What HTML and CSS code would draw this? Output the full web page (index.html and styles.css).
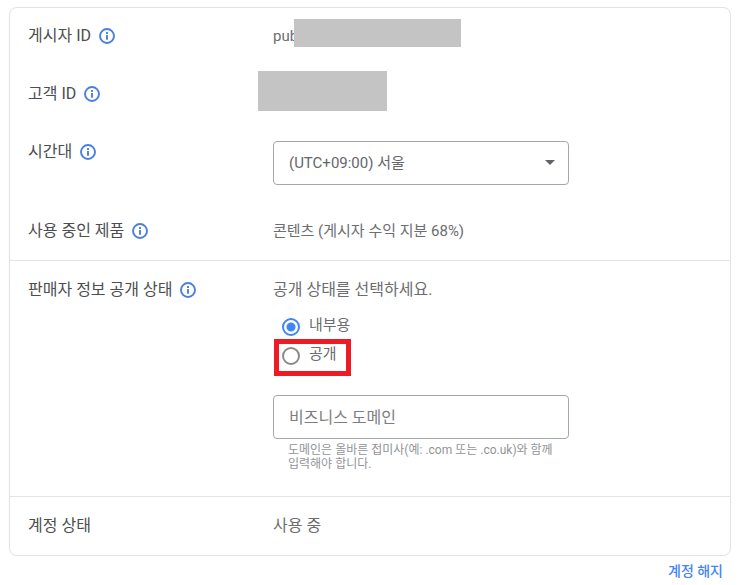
FILE: index.html
```html
<!DOCTYPE html>
<html lang="ko">
<head>
<meta charset="utf-8">
<meta name="viewport" content="width=device-width, initial-scale=1">
<title>계정 정보</title>
<link rel="stylesheet" href="styles.css">
</head>
<body>
<svg class="sprite" aria-hidden="true">
  <symbol id="info" viewBox="0 0 16 16">
    <circle cx="8" cy="8" r="7" fill="none" stroke="currentColor" stroke-width="1.9"/>
    <path d="M8 7v4.8M8 4.1v1.8" stroke="currentColor" stroke-width="1.9"/>
  </symbol>
</svg>
<main class="account">
  <div class="card">
    <section class="section">
      <div class="row">
        <div class="label">게시자 ID <svg class="info"><use href="#info"/></svg></div>
        <div class="value value-id">pub-<span class="mask mask-publisher"></span></div>
      </div>
      <div class="row">
        <div class="label">고객 ID <svg class="info"><use href="#info"/></svg></div>
        <div class="value value-id"><span class="mask mask-customer"></span></div>
      </div>
      <div class="row">
        <div class="label"><label for="timezone">시간대</label> <svg class="info"><use href="#info"/></svg></div>
        <div class="value select-wrap">
          <select class="field" id="timezone"><option>(UTC+09:00) 서울</option></select>
          <svg class="arrow" viewBox="0 0 10 5" aria-hidden="true"><path d="M0 0h10L5 5z" fill="currentColor"/></svg>
        </div>
      </div>
      <div class="row">
        <div class="label">사용 중인 제품 <svg class="info"><use href="#info"/></svg></div>
        <div class="value mixed">콘텐츠 (게시자 수익 지분 68%)</div>
      </div>
    </section>
    <section class="section">
      <div class="row">
        <div class="label">판매자 정보 공개 상태 <svg class="info"><use href="#info"/></svg></div>
        <div class="value">
          <div id="visibility">공개 상태를 선택하세요.</div>
          <div class="options" role="radiogroup" aria-labelledby="visibility">
            <label class="option"><input type="radio" name="visibility" checked><span>내부용</span></label>
            <label class="option highlight"><input type="radio" name="visibility"><span>공개</span></label>
          </div>
          <input class="field" type="text" placeholder="비즈니스 도메인" aria-label="비즈니스 도메인" aria-describedby="hint">
          <div class="hint" id="hint">도메인은 올바른 접미사(예: .com 또는 .co.uk)와 함께 입력해야 합니다.</div>
        </div>
      </div>
    </section>
    <section class="section">
      <div class="row">
        <div class="label">계정 상태</div>
        <div class="value">사용 중</div>
      </div>
    </section>
  </div>
  <div class="footer"><a href="#">계정 해지</a></div>
</main>
</body>
</html>
```
FILE: styles.css
```css
* {
  box-sizing: border-box;
}

body {
  margin: 0;
  background: #fff;
  color: #6b6d70;
  font: 16px/24px Roboto, "Noto Sans CJK KR", sans-serif;
}

.sprite {
  display: none;
}

.account {
  padding: 7px 10px 0 9px;
}

.card {
  border: 1px solid #e4e4e4;
  border-radius: 8px;
  box-shadow: 0 0 1px #e4e4e4;
}

.section {
  display: flex;
  flex-direction: column;
  gap: 34px;
  padding: 16px 18px 17px;
}

.section + .section {
  padding-top: 17px;
  border-top: 1px solid #e4e4e4;
}

.row {
  display: grid;
  grid-template-columns: 245px minmax(0, 1fr);
}

.label {
  display: flex;
  align-items: center;
  align-self: start;
  gap: 8px;
  color: #4b4d50;
}

.info {
  width: 16px;
  height: 16px;
  color: #4a7fe0;
}

.mixed,
.value-id {
  font-size: 15px;
}

.value-id {
  position: relative;
  height: 24px;
}

.mask {
  position: absolute;
  background: #c4c4c4;
}

.mask-publisher {
  top: -5px;
  left: 21px;
  width: 167px;
  height: 28px;
}

.mask-customer {
  top: -11px;
  left: -15px;
  width: 129px;
  height: 40px;
}

.select-wrap {
  position: relative;
  max-width: 296px;
}

.field {
  display: block;
  width: 100%;
  max-width: 296px;
  height: 44px;
  padding: 0 15px;
  border: 1px solid #a4a8ab;
  border-radius: 4px;
  background: #fff;
  color: #65676a;
  font: inherit;
  appearance: none;
}

.field::placeholder {
  color: #7c7e81;
  opacity: 1;
}

select.field {
  margin-top: 1px;
  font-size: 15px;
}

.arrow {
  position: absolute;
  top: 20px;
  right: 14px;
  width: 10px;
  height: 5px;
  color: #5f6368;
  pointer-events: none;
}

.options {
  display: flex;
  flex-direction: column;
  align-items: flex-start;
  gap: 5px;
  margin: 11px 0 29px;
}

.option {
  position: relative;
  display: flex;
  align-items: flex-end;
  gap: 9px;
  height: 24px;
  padding-left: 9px;
  font-size: 15px;
}

.option input {
  width: 18px;
  height: 18px;
  margin: 0 0 1px;
  border: 2px solid #8a8a8a;
  border-radius: 50%;
  appearance: none;
}

.option input:checked {
  border-color: #4285f4;
  background: radial-gradient(circle, #4285f4 4px, transparent 5px);
}

.highlight::after {
  content: "";
  position: absolute;
  inset: -3px -14px -10px 1px;
  border: 5px solid #ed1c24;
}

.hint {
  max-width: 296px;
  padding: 4px 15px 8px;
  color: #929497;
  font-size: 12px;
  line-height: 14px;
}

.footer {
  padding: 3px 8px;
  text-align: right;
  font-size: 14px;
}

.footer a {
  color: #4285f4;
  font-weight: 500;
  text-decoration: none;
}
```
